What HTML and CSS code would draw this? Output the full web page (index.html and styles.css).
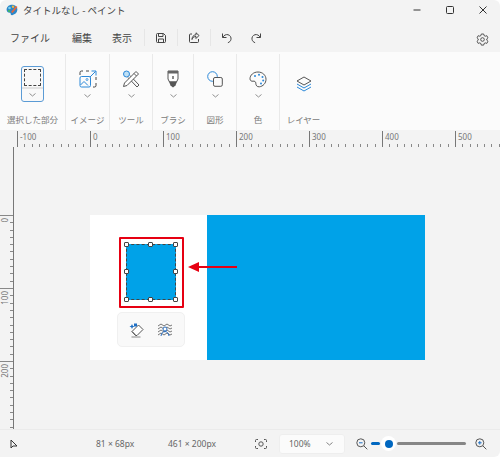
FILE: index.html
```html
<!DOCTYPE html>
<html lang="ja">
<head>
  <meta charset="UTF-8" />
  <meta name="viewport" content="width=device-width, initial-scale=1.0"/>
  <title>タイトルなし - ペイント</title>
  <link rel="stylesheet" href="styles.css">
</head>
<body>
<div class="window">

  <!-- title bar -->
  <div class="titlebar">
    <svg class="app-icon" width="12" height="12" viewBox="0 0 12 12">
      <path d="M6 .8C2.8.8.6 3 .6 5.8c0 2 1.400 3 3 3 .9 0 1.100.6 1.100 1.300 0 .9.700 1.300 1.500 1.100 3-.6 5.200-2.800 5.200-5.600C11.400 3 9.200.8 6 .8z" fill="#2b88c9"/>
      <circle cx="3.500" cy="4" r="1.300" fill="#7fd0ea"/>
      <circle cx="7" cy="2.800" r="1.200" fill="#f2b33d"/>
      <path d="M11.500 3 6.500 9 5 8l5-6z" fill="#e4663f"/>
      <path d="M2 6h2v2H2z" fill="#3fb26b"/>
    </svg>
    <span class="title-text">タイトルなし - ペイント</span>
    <div class="win-controls">
      <svg width="10" height="10" viewBox="0 0 10 10"><path d="M1.500 5h7" stroke="#333" fill="none"/></svg>
      <svg width="10" height="10" viewBox="0 0 10 10"><rect x="1.500" y="1.500" width="7" height="7" rx="1" stroke="#333" fill="none"/></svg>
      <svg width="10" height="10" viewBox="0 0 10 10"><path d="M1.500 1.500l7 7M8.500 1.500l-7 7" stroke="#333" fill="none"/></svg>
    </div>
  </div>

  <!-- menu bar -->
  <div class="menubar">
    <span class="menu-item m-file">ファイル</span>
    <span class="menu-item m-edit">編集</span>
    <span class="menu-item m-view">表示</span>
    <div class="menu-sep"></div>
    <svg class="menu-icon" width="12" height="12" viewBox="0 0 12 12"><path d="M1.500 2.500a1 1 0 0 1 1-1h6l2 2v6a1 1 0 0 1-1 1h-7a1 1 0 0 1-1-1zM3.500 1.500v3h4.500v-3M3.500 10.500v-3.500h5v3.500" fill="none" stroke="#444"/></svg>
    <div class="menu-sep"></div>
    <svg class="menu-icon" width="12" height="12" viewBox="0 0 12 12"><path d="M4 2H2.500a1 1 0 0 0-1 1v6.500a1 1 0 0 0 1 1h7a1 1 0 0 0 1-1V7M4 7.500C4.500 5.500 6 4.500 8 4.500V6.500L11 3.500 8 .8V2.800C5.500 2.800 4 5 4 7.500z" fill="none" stroke="#444"/></svg>
    <div class="menu-sep"></div>
    <svg class="menu-icon" width="12" height="12" viewBox="0 0 12 12"><path d="M1.500 1.500v4h4M1.700 5.300C3 3.200 5 2.200 7 2.700c2.300.6 3.500 2.800 2.900 5-.4 1.500-1.500 2.500-3 3" fill="none" stroke="#444"/></svg>
    <svg class="menu-icon redo" width="12" height="12" viewBox="0 0 12 12"><path d="M10.500 1.500v4h-4M10.300 5.300C9 3.200 7 2.200 5 2.700c-2.300.6-3.500 2.800-2.900 5 .4 1.500 1.500 2.500 3 3" fill="none" stroke="#444"/></svg>
    <svg class="gear" width="13" height="13" viewBox="0 0 13 13"><path d="M5.300 1h2.400l.4 1.600 1.200.6 1.500-.5 1.200 2.100-1.200 1.100v1.300l1.200 1.100-1.200 2.100-1.500-.5-1.200.6-.4 1.600H5.300l-.4-1.600-1.200-.6-1.500.5L1 8.300l1.200-1.100V5.900L1 4.800l1.200-2.100 1.500.5 1.200-.6z" fill="none" stroke="#444" stroke-width=".9"/><circle cx="6.500" cy="6.500" r="1.800" fill="none" stroke="#444" stroke-width=".9"/></svg>
  </div>

  <!-- ribbon -->
  <div class="ribbon">
    <div class="group g-select">
      <div class="tool-tile">
        <div class="tile-top"><div class="dash-box"></div></div>
        <div class="tile-bottom"><svg class="chev" width="7" height="4" viewBox="0 0 7 4"><path d="M.5.500l3 2.500 3-2.500" fill="none" stroke="#777" stroke-width=".8"/></svg></div>
      </div>
      <span class="group-label">選択した部分</span>
    </div>
    <div class="group g-image">
      <div class="icon-slot">
        <svg width="18" height="18" viewBox="0 0 18 18">
          <path d="M1 5V2.500A1.500 1.500 0 0 1 2.500 1H4M7 1h3M17 13v2.500a1.500 1.500 0 0 1-1.500 1.500H14M17 7v3" fill="none" stroke="#444"/>
          <rect x="1" y="6.500" width="10.500" height="10.500" rx="1.500" fill="none" stroke="#2b88d8"/>
          <path d="M1.500 15l3.500-3.500 4 4" fill="none" stroke="#2b88d8"/>
          <circle cx="8" cy="9.500" r="1" fill="none" stroke="#2b88d8" stroke-width=".8"/>
          <path d="M11 7l5.500-5.500M12.500 1h4.500v4.500" fill="none" stroke="#2b88d8"/>
        </svg>
      </div>
      <svg class="chev" width="7" height="4" viewBox="0 0 7 4"><path d="M.5.500l3 2.500 3-2.500" fill="none" stroke="#777" stroke-width=".8"/></svg>
      <span class="group-label">イメージ</span>
    </div>
    <div class="group g-tools">
      <div class="icon-slot">
        <svg width="18" height="18" viewBox="0 0 18 18">
          <path d="M6 7.500 15 17l2-2-9-9.500" fill="none" stroke="#555"/>
          <circle cx="4.500" cy="4" r="3" fill="#bfe0f5" stroke="#2b88d8"/>
          <path d="M14 1.500l2.500 2.500L5 15.500 1.500 16.500 2.500 13z" fill="#fff" stroke="#555"/>
          <path d="M12 3.500l2.500 2.500" stroke="#555" fill="none"/>
        </svg>
      </div>
      <svg class="chev" width="7" height="4" viewBox="0 0 7 4"><path d="M.5.500l3 2.500 3-2.500" fill="none" stroke="#777" stroke-width=".8"/></svg>
      <span class="group-label">ツール</span>
    </div>
    <div class="group g-brush">
      <div class="icon-slot">
        <svg width="12" height="18" viewBox="0 0 12 18">
          <path d="M1 1h10v8l-1.500 3H2.500L1 9z" fill="#fff" stroke="#555"/>
          <path d="M1 1h10v2.500H1z" fill="#666"/>
          <path d="M2 11.500h8l-1.500 4L6 17.500l-2.500-2z" fill="#555"/>
          <path d="M5 6h2v3H5z" fill="#888"/>
        </svg>
      </div>
      <svg class="chev" width="7" height="4" viewBox="0 0 7 4"><path d="M.5.500l3 2.500 3-2.500" fill="none" stroke="#777" stroke-width=".8"/></svg>
      <span class="group-label">ブラシ</span>
    </div>
    <div class="group g-shape">
      <div class="icon-slot">
        <svg width="16" height="16" viewBox="0 0 16 16">
          <circle cx="5.500" cy="5.500" r="4.800" fill="none" stroke="#2b88d8"/>
          <rect x="6.500" y="6.500" width="8.800" height="8.800" rx="1.500" fill="#fbfbfb" stroke="#555"/>
        </svg>
      </div>
      <svg class="chev" width="7" height="4" viewBox="0 0 7 4"><path d="M.5.500l3 2.500 3-2.500" fill="none" stroke="#777" stroke-width=".8"/></svg>
      <span class="group-label">図形</span>
    </div>
    <div class="group g-color">
      <div class="icon-slot">
        <svg width="18" height="17" viewBox="0 0 18 17">
          <path d="M9 1C4.500 1 1 4 1 7.800c0 1.700 1.300 2.700 3 2.400 1.500-.3 2.800.3 2.800 2 0 2.200 1.200 3.800 3.500 3.600 3.800-.4 6.700-3.700 6.700-7.500C17 4.200 13.500 1 9 1z" fill="none" stroke="#555"/>
          <g fill="#2b88d8">
            <circle cx="6" cy="5" r="1"/><circle cx="10" cy="3.800" r="1"/><circle cx="13.500" cy="6" r="1"/><circle cx="14.200" cy="9.500" r="1"/><circle cx="12" cy="12.500" r="1"/>
          </g>
        </svg>
      </div>
      <svg class="chev" width="7" height="4" viewBox="0 0 7 4"><path d="M.5.500l3 2.500 3-2.500" fill="none" stroke="#777" stroke-width=".8"/></svg>
      <span class="group-label">色</span>
    </div>
    <div class="group g-layer">
      <div class="icon-slot layer-slot">
        <svg width="16" height="16" viewBox="0 0 16 16">
          <path d="M8 1l7 4-7 4-7-4z" fill="none" stroke="#555"/>
          <path d="M1 8l7 4 7-4" fill="none" stroke="#2b88d8"/>
          <path d="M1 11l7 4 7-4" fill="none" stroke="#2b88d8"/>
        </svg>
      </div>
      <span class="group-label">レイヤー</span>
    </div>
  </div>

  <!-- rulers and canvas -->
  <div class="ruler-h">
    <span class="rh-cell">-100</span><span class="rh-cell">0</span><span class="rh-cell">100</span><span class="rh-cell">200</span><span class="rh-cell">300</span><span class="rh-cell">400</span><span class="rh-cell">500</span>
  </div>
  <div class="work-row">
    <div class="ruler-v">
      <span class="rv-cell"><span class="rv-text">0</span></span>
      <span class="rv-cell"><span class="rv-text">100</span></span>
      <span class="rv-cell"><span class="rv-text">200</span></span>
    </div>
    <div class="workspace">
      <div class="canvas">
        <div class="canvas-white"></div>
        <div class="canvas-blue"></div>
        <div class="selection">
          <i class="handle h1"></i><i class="handle h2"></i><i class="handle h3"></i><i class="handle h4"></i>
          <i class="handle h5"></i><i class="handle h6"></i><i class="handle h7"></i><i class="handle h8"></i>
        </div>
        <div class="highlight"></div>
        <svg class="arrow" width="50" height="12" viewBox="0 0 50 12">
          <path d="M10 6h39" stroke="#e60012" stroke-width="2" fill="none"/>
          <path d="M0 6l11-5v10z" fill="#e60012"/>
        </svg>
        <div class="float-bar">
          <svg width="16" height="16" viewBox="0 0 16 16">
            <path d="M3 9.500L9.500 3l4.500 4.500L8 13.500H6.500z" fill="#fff" stroke="#555"/>
            <path d="M3 9.500l4 4" stroke="#555" fill="none"/>
            <path d="M2.500 15h9" stroke="#888" fill="none"/>
            <path d="M3 2l.8 1.700L5.500 4.500l-1.700.8L3 7l-.8-1.700L.5 4.500l1.700-.8z" fill="#1e6fc4"/>
            <rect x="5" y="1.500" width="3" height="3" fill="#1e6fc4"/>
          </svg>
          <svg width="16" height="14" viewBox="0 0 16 14">
            <path d="M1 3l3-2 3 2 3-2 3 2 2-1M1 6l3-2 3 2 3-2 3 2 2-1M1 9l3-2 3 2 3-2 3 2 2-1M1 12l3-2 3 2 3-2 3 2 2-1" fill="none" stroke="#666" stroke-width=".9"/>
            <circle cx="8" cy="6" r="2" fill="#fff" stroke="#2b6fc0"/>
            <path d="M4 13c.4-3 2-4.500 4-4.500s3.600 1.500 4 4.500" fill="none" stroke="#2b6fc0"/>
          </svg>
        </div>
      </div>
    </div>
  </div>

  <!-- status bar -->
  <div class="statusbar">
    <svg class="st-cursor" width="8" height="10" viewBox="0 0 8 10"><path d="M1 1v8l2-2h4z" fill="none" stroke="#333"/></svg>
    <span class="st-size">81 × 68px</span>
    <span class="st-canvas">461 × 200px</span>
    <svg class="st-fit" width="12" height="10" viewBox="0 0 12 10">
      <path d="M.5 3V1.500a1 1 0 0 1 1-1H3M9 .5h1.500a1 1 0 0 1 1 1V3M11.500 7v1.500a1 1 0 0 1-1 1H9M3 9.500H1.500a1 1 0 0 1-1-1V7" fill="none" stroke="#555"/>
      <circle cx="6" cy="5" r="2.200" fill="none" stroke="#555"/>
    </svg>
    <div class="zoom-select">
      <span>100%</span>
      <svg width="7" height="4" viewBox="0 0 7 4"><path d="M.5.500l3 2.500 3-2.500" fill="none" stroke="#666" stroke-width=".8"/></svg>
    </div>
    <svg class="st-zoomout" width="12" height="12" viewBox="0 0 12 12"><circle cx="4.800" cy="4.800" r="4" fill="none" stroke="#555"/><path d="M7.800 7.800l3.500 3.500" stroke="#555" fill="none"/><path d="M3 4.800h3.600" stroke="#1e6fc4" fill="none"/></svg>
    <div class="slider">
      <div class="slider-done"></div>
      <div class="slider-thumb"><div class="slider-dot"></div></div>
      <div class="slider-rest"></div>
    </div>
    <svg class="st-zoomin" width="12" height="12" viewBox="0 0 12 12"><circle cx="4.800" cy="4.800" r="4" fill="none" stroke="#555"/><path d="M7.800 7.800l3.500 3.500" stroke="#555" fill="none"/><path d="M3 4.800h3.600M4.800 3v3.600" stroke="#1e6fc4" fill="none"/></svg>
  </div>
</div>
</body>
</html>
```

FILE: styles.css
```css
:root {
  --chrome: #f3f3f3;
  --ribbon: #fbfbfb;
  --line: #e9e9e9;
  --label: #7a7a7a;
  --text: #333;
  --paint-blue: #00a2e8;
  --accent: #0067c0;
  --red: #e60012;
}

* {
  box-sizing: border-box;
}

html, body {
  margin: 0;
  height: 100%;
  background: #fff;
}

body {
  font-family: "Noto Sans CJK JP", "Noto Sans", sans-serif;
  color: var(--text);
  overflow: hidden;
}

.window {
  width: 500px;
  height: 457px;
  display: flex;
  flex-direction: column;
  background: var(--chrome);
  border-radius: 6px 6px 6px 0;
  overflow: hidden;
}

/* title bar */
.titlebar {
  height: 25px;
  flex: none;
  display: flex;
  align-items: center;
  padding: 0 0 5px 6px;
}

.app-icon {
  margin-right: 5px;
}

.title-text {
  font-size: 9.5px;
  color: #444;
}

.win-controls {
  margin-left: auto;
  display: flex;
  gap: 23px;
  padding-right: 12px;
}

/* menu bar */
.menubar {
  height: 27px;
  flex: none;
  display: flex;
  align-items: center;
  padding-bottom: 2px;
}

.menu-item {
  font-size: 10px;
  color: #444;
}

.m-file { margin-left: 10px; }
.m-edit { margin-left: 22px; }
.m-view { margin-left: 20px; }

.menu-sep {
  width: 1px;
  height: 17px;
  background: #e6e6e6;
  margin: 0 10px;
}

.menubar .menu-sep:first-of-type {
  margin-left: 12px;
}

.redo {
  margin-left: 17px;
}

.gear {
  margin-left: auto;
  margin-right: 11px;
  margin-top: 3px;
}

/* ribbon */
.ribbon {
  height: 78px;
  flex: none;
  display: flex;
  background: var(--ribbon);
  padding-top: 2px;
}

.group {
  display: flex;
  flex-direction: column;
  align-items: center;
  height: 76px;
  border-right: 1px solid var(--line);
  position: relative;
}

.g-select { width: 66px; }
.g-image { width: 44px; }
.g-tools { width: 43px; }
.g-brush { width: 41px; }
.g-shape { width: 43px; }
.g-color { width: 43px; }
.g-layer { width: 47px; border-right: none; }

.group-label {
  margin-top: auto;
  height: 18px;
  line-height: 14px;
  font-size: 8.5px;
  color: var(--label);
  white-space: nowrap;
}

.icon-slot {
  height: 18px;
  margin-top: 16px;
  margin-bottom: 6px;
  display: flex;
  align-items: center;
  justify-content: center;
}

.layer-slot {
  margin-top: 21px;
}

.chev {
  display: block;
}

.tool-tile {
  width: 23px;
  height: 36px;
  margin-top: 12px;
  border: 1px solid #5b9bd5;
  border-radius: 3px;
  overflow: hidden;
  display: flex;
  flex-direction: column;
  background: #f9f9f9;
}

.tile-top {
  height: 22px;
  display: flex;
  align-items: center;
  justify-content: center;
  border-bottom: 2px solid #e3e3e3;
  flex: none;
}

.dash-box {
  width: 17px;
  height: 17px;
  border: 1px dashed #444;
  border-radius: 1px;
}

.tile-bottom {
  flex: 1;
  display: flex;
  align-items: center;
  justify-content: center;
}

/* rulers */
.ruler-h {
  height: 16px;
  flex: none;
  margin-top: 1px;
  margin-left: 17px;
  display: flex;
  background-image: linear-gradient(#777, #777);
  background-size: 1px 3px;
  background-repeat: no-repeat;
}

.rh-cell {
  width: 73px;
  flex: none;
  height: 16px;
  border-left: 1px solid #777;
  padding-left: 2px;
  font-family: "Noto Sans", sans-serif;
  font-size: 8px;
  line-height: 11px;
  color: #777;
  background-image: repeating-linear-gradient(90deg, transparent 0, transparent 6.3px, #888 6.3px, #888 7.3px);
  background-size: 100% 3px;
  background-position: bottom left;
  background-repeat: no-repeat;
}

.work-row {
  flex: 1;
  display: flex;
  min-height: 0;
}

.ruler-v {
  width: 14px;
  flex: none;
  border-right: 1px solid #777;
  padding-top: 68px;
  display: flex;
  flex-direction: column;
}

.rv-cell {
  height: 73px;
  flex: none;
  border-top: 1px solid #888;
  position: relative;
  background-image: repeating-linear-gradient(180deg, transparent 0, transparent 6.3px, #888 6.3px, #888 7.3px);
  background-size: 3px 100%;
  background-position: top right;
  background-repeat: no-repeat;
}

.rv-text {
  display: block;
  writing-mode: vertical-rl;
  transform: rotate(180deg);
  font-family: "Noto Sans", sans-serif;
  font-size: 8px;
  line-height: 10px;
  color: #777;
  padding-bottom: 2px;
  margin-right: 3px;
}

.workspace {
  flex: 1;
  padding: 68px 0 0 76px;
}

/* canvas: selection, highlight and arrow lie over the picture */
.canvas {
  width: 335px;
  height: 145px;
  display: flex;
  position: relative;
}

.canvas-white {
  width: 117px;
  background: #fff;
}

.canvas-blue {
  flex: 1;
  background: var(--paint-blue);
}

.selection {
  position: absolute;
  left: 36px;
  top: 29px;
  width: 50px;
  height: 56px;
  background: var(--paint-blue);
  border: 1px dashed #444;
}

.handle {
  position: absolute;
  width: 5px;
  height: 5px;
  background: #fff;
  border: 1px solid #444;
  border-radius: 1px;
}

.h1 { left: -3px; top: -3px; }
.h2 { left: 21px; top: -3px; }
.h3 { right: -3px; top: -3px; }
.h4 { left: -3px; top: 24px; }
.h5 { right: -3px; top: 24px; }
.h6 { left: -3px; bottom: -3px; }
.h7 { left: 21px; bottom: -3px; }
.h8 { right: -3px; bottom: -3px; }

.highlight {
  position: absolute;
  left: 29px;
  top: 22px;
  width: 65px;
  height: 71px;
  border: 2px solid var(--red);
  border-radius: 1px;
}

.arrow {
  position: absolute;
  left: 98px;
  top: 46px;
}

.float-bar {
  position: absolute;
  left: 27px;
  top: 97px;
  width: 68px;
  height: 35px;
  display: flex;
  align-items: center;
  justify-content: space-around;
  padding: 0 5px;
  background: #f9f9f9;
  border: 1px solid #f0f0f0;
  border-radius: 5px;
}

/* status bar */
.statusbar {
  height: 28px;
  flex: none;
  display: flex;
  align-items: center;
  border-top: 1px solid #ebebeb;
  font-size: 8.5px;
  color: #666;
  font-family: "Noto Sans", sans-serif;
}

.st-cursor {
  margin-left: 10px;
  flex: none;
}

.st-size {
  margin-left: 78px;
  width: 72px;
  white-space: nowrap;
}

.st-canvas {
  width: 87px;
  white-space: nowrap;
}

.st-fit {
  flex: none;
}

.zoom-select {
  width: 66px;
  height: 20px;
  margin-left: 12px;
  display: flex;
  align-items: center;
  justify-content: space-between;
  padding: 0 11px 0 9px;
  background: #fbfbfb;
  border: 1px solid #eee;
  border-radius: 3px;
}

.st-zoomout {
  margin-left: 11px;
  flex: none;
}

.slider {
  width: 95px;
  margin-left: 3px;
  display: flex;
  align-items: center;
}

.slider-done {
  width: 9px;
  height: 3px;
  background: var(--accent);
  border-radius: 2px;
}

.slider-thumb {
  width: 15px;
  height: 15px;
  margin: 0 1px;
  border-radius: 50%;
  background: #fff;
  display: flex;
  align-items: center;
  justify-content: center;
  flex: none;
}

.slider-dot {
  width: 8px;
  height: 8px;
  border-radius: 50%;
  background: var(--accent);
}

.slider-rest {
  flex: 1;
  height: 3px;
  background: #868686;
  border-radius: 2px;
}

.st-zoomin {
  margin-left: 9px;
  flex: none;
}
```
